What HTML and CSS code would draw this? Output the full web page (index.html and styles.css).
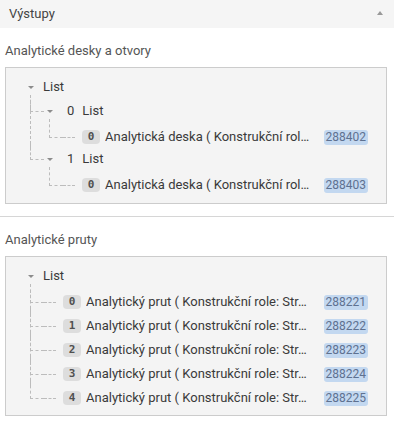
FILE: index.html
```html
<!DOCTYPE html>
<html lang="cs">

<head>
    <meta charset="UTF-8">
    <meta name="viewport" content="width=device-width, initial-scale=1.0">
    <title>Výstupy</title>
    <link rel="stylesheet" href="styles.css">
</head>

<body>
    <div class="panel">
        <div class="panel-head">
            <span class="panel-title">Výstupy</span>
            <span class="caret-up"></span>
        </div>

        <section class="group">
            <h3 class="group-title">Analytické desky a otvory</h3>
            <div class="tree-box">
                <ul class="tree">
                    <li class="node">
                        <div class="row"><span class="toggle"></span><span class="name">List</span></div>
                        <ul>
                            <li class="node">
                                <div class="row"><span class="toggle"></span><span class="idx">0</span><span class="name">List</span></div>
                                <ul>
                                    <li class="leaf">
                                        <div class="row leaf-row"><span class="stub"></span><span class="badge">0</span><span class="label">Analytická deska ( Konstrukční rol…</span><span class="id"><span class="id-tag">288402</span></span></div>
                                    </li>
                                </ul>
                            </li>
                            <li class="node">
                                <div class="row"><span class="toggle"></span><span class="idx">1</span><span class="name">List</span></div>
                                <ul>
                                    <li class="leaf">
                                        <div class="row leaf-row"><span class="stub"></span><span class="badge">0</span><span class="label">Analytická deska ( Konstrukční rol…</span><span class="id"><span class="id-tag">288403</span></span></div>
                                    </li>
                                </ul>
                            </li>
                        </ul>
                    </li>
                </ul>
            </div>
        </section>

        <section class="group">
            <h3 class="group-title">Analytické pruty</h3>
            <div class="tree-box">
                <ul class="tree">
                    <li class="node">
                        <div class="row"><span class="toggle"></span><span class="name">List</span></div>
                        <ul>
                            <li class="leaf">
                                <div class="row leaf-row"><span class="stub"></span><span class="badge">0</span><span class="label">Analytický prut ( Konstrukční role: Str…</span><span class="id"><span class="id-tag">288221</span></span></div>
                            </li>
                            <li class="leaf">
                                <div class="row leaf-row"><span class="stub"></span><span class="badge">1</span><span class="label">Analytický prut ( Konstrukční role: Str…</span><span class="id"><span class="id-tag">288222</span></span></div>
                            </li>
                            <li class="leaf">
                                <div class="row leaf-row"><span class="stub"></span><span class="badge">2</span><span class="label">Analytický prut ( Konstrukční role: Str…</span><span class="id"><span class="id-tag">288223</span></span></div>
                            </li>
                            <li class="leaf">
                                <div class="row leaf-row"><span class="stub"></span><span class="badge">3</span><span class="label">Analytický prut ( Konstrukční role: Str…</span><span class="id"><span class="id-tag">288224</span></span></div>
                            </li>
                            <li class="leaf">
                                <div class="row leaf-row"><span class="stub"></span><span class="badge">4</span><span class="label">Analytický prut ( Konstrukční role: Str…</span><span class="id"><span class="id-tag">288225</span></span></div>
                            </li>
                        </ul>
                    </li>
                </ul>
            </div>
        </section>
    </div>
</body>

</html>
```

FILE: styles.css
```css
* {
    box-sizing: border-box;
    margin: 0;
    padding: 0;
}

body {
    font-family: Roboto, "Noto Sans", sans-serif;
    font-size: 13px;
    color: #3a3a3a;
    background: #fff;
}

.panel-head {
    display: flex;
    align-items: center;
    justify-content: space-between;
    height: 28px;
    padding: 0 11px 0 9px;
    background: #f5f5f5;
    color: #444;
    line-height: 16px;
}

.caret-up {
    width: 0;
    height: 0;
    border-left: 3px solid transparent;
    border-right: 3px solid transparent;
    border-bottom: 4px solid #999;
    margin-top: -2px;
}

.group {
    padding: 15px 7px 12px 5px;
}

.group + .group {
    border-top: 1px solid #d6d6d6;
    padding-bottom: 6px;
}

.group-title {
    font-size: 13px;
    font-weight: 400;
    line-height: 16px;
    color: #555;
    margin-bottom: 8px;
}

.tree-box {
    background: #f4f4f4;
    border: 1px solid #cccccc;
    padding: 9px 18px 6px 19px;
}

.group + .group .tree-box {
    padding-bottom: 5px;
}

.tree,
.tree ul {
    list-style: none;
}

.tree ul {
    margin-top: 4px;
    padding-left: 19px;
}

.tree ul > li {
    position: relative;
}

.tree ul > li::before {
    content: '';
    position: absolute;
    left: -14px;
    top: -6px;
    width: 13px;
    height: 16px;
    border-left: 1px dashed #bcbcbc;
    border-bottom: 1px dashed #bcbcbc;
}

.tree ul > li.leaf::before {
    height: 18px;
}

.tree ul > li:not(:last-child)::after {
    content: '';
    position: absolute;
    left: -14px;
    top: 0;
    bottom: 0;
    border-left: 1px dashed #bcbcbc;
}

.row {
    display: flex;
    align-items: center;
    height: 20px;
    line-height: 16px;
    white-space: nowrap;
}

.leaf-row {
    height: 24px;
}

.toggle {
    display: flex;
    align-items: center;
    justify-content: center;
    width: 12px;
    height: 12px;
    margin-right: 6px;
}

.toggle::before {
    content: '';
    border-left: 3px solid transparent;
    border-right: 3px solid transparent;
    border-top: 3px solid #8c8c8c;
}

.idx {
    margin-left: 5px;
    margin-right: 8px;
}

.stub {
    width: 12px;
    border-top: 1px dashed #bcbcbc;
}

.badge {
    flex: none;
    width: 18px;
    margin-left: 7px;
    margin-right: 5px;
    height: 14px;
    line-height: 14px;
    text-align: center;
    border-radius: 4px;
    background: #dddddd;
    color: #505050;
    font-family: "DejaVu Sans Mono", monospace;
    font-size: 11px;
    font-weight: 700;
}

.label {
    flex: 1;
    min-width: 0;
    overflow: hidden;
}

.id {
    flex: none;
    width: 56px;
    text-align: right;
}

.id-tag {
    display: inline-block;
    padding: 0 2px;
    height: 15px;
    line-height: 15px;
    border-radius: 3px;
    background: #c3d8f0;
    color: #5e7190;
    font-size: 12px;
}
```
